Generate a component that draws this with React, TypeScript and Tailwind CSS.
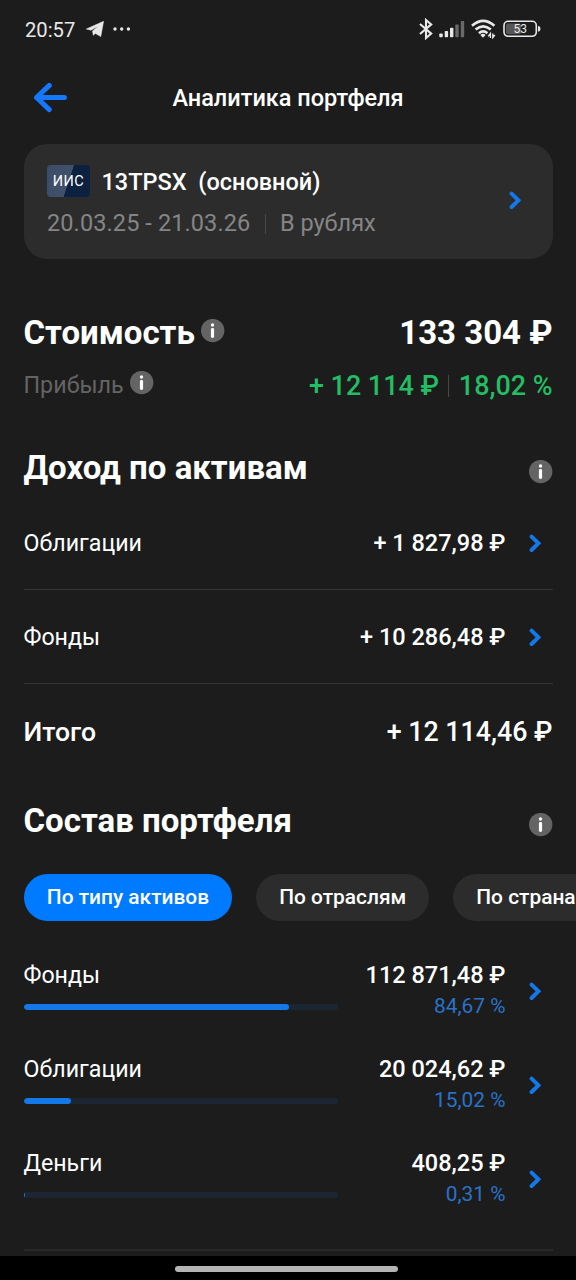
import React from "react";

function Chevron() {
  return (
    <svg width="14" height="20" viewBox="0 0 14 20" fill="none" className="shrink-0">
      <path d="M2.6 3.6L9.4 10.3L2.6 17" stroke="#1478e8" strokeWidth="4" strokeLinecap="round" strokeLinejoin="miter" />
    </svg>
  );
}

function Info() {
  return (
    <svg width="24" height="24" viewBox="0 0 24 24" className="shrink-0">
      <circle cx="11.7" cy="11.6" r="11.7" fill="#646464" />
      <circle cx="11.5" cy="6" r="1.7" fill="#fff" />
      <rect x="9.9" y="9" width="3.2" height="10" rx="1.4" fill="#fff" />
    </svg>
  );
}

function StatusBar() {
  return (
    <div className="flex h-[58px] items-center pl-[25px] pr-[35px] text-[#e8e8e8]">
      <span className="pt-px text-[20.2px] leading-6">20:57</span>
      <svg width="18" height="16" viewBox="0 0 18 16" className="ml-[10.5px]">
        <path d="M0.3 8L17.6 0.3L14.8 15.6L9.4 12.4L7.3 14.3L6.5 9.9L12.4 4.9L4.9 9.2Z" fill="currentColor" stroke="currentColor" strokeWidth="0.5" strokeLinejoin="round" />
      </svg>
      <svg width="18" height="4" viewBox="0 0 18 4" className="-mt-px ml-[9px]" fill="currentColor">
        <circle cx="2" cy="2" r="1.7" />
        <circle cx="8.7" cy="2" r="1.7" />
        <circle cx="15.4" cy="2" r="1.7" />
      </svg>
      <div className="ml-auto flex items-center">
        <svg width="16" height="22" viewBox="0 0 16 22" fill="none" stroke="currentColor" strokeWidth="2.1">
          <path d="M2 6L13.2 15.6L8 20V2L13.2 6.4L2 16" />
        </svg>
        <svg width="26" height="18" viewBox="0 0 26 18" className="ml-[5px]" fill="currentColor">
          <rect x="0.3" y="13.4" width="3.4" height="3.8" rx="0.8" />
          <rect x="5.7" y="11" width="3.4" height="6.2" rx="0.8" />
          <rect x="11" y="7.8" width="3.4" height="9.4" rx="0.8" />
          <rect x="16.3" y="4.4" width="3.4" height="12.8" rx="0.8" fill="#696969" />
          <rect x="21.8" y="1" width="3.4" height="16.2" rx="0.8" fill="#696969" />
        </svg>
        <svg width="25" height="20" viewBox="0 0 25 20" className="ml-[6px]" fill="none" stroke="currentColor" strokeWidth="2.7">
          <path d="M1 6.7Q12.2 -3.1 23.4 6.7" />
          <path d="M4.6 10.5Q12.2 4.1 19.8 10.5" />
          <path d="M8 14.2Q12.2 10.6 16.4 14.2" />
          <path d="M9.4 16Q12 13.6 14.6 16L12 18.8Z" fill="currentColor" stroke="none" />
          <path d="M19.4 19V14.6L17.2 17.4M21.8 14.4V18.6L23.8 16" strokeWidth="1.4" />
        </svg>
        <svg width="38" height="18" viewBox="0 0 38 18" className="ml-[7px]">
          <rect x="3" y="3.4" width="15" height="10.8" rx="2" fill="#565656" />
          <rect x="1" y="1.3" width="32.3" height="15" rx="4.2" fill="none" stroke="currentColor" strokeWidth="1.6" />
          <path d="M35 6Q37.4 6 37.4 8.8Q37.4 11.6 35 11.6Z" fill="currentColor" />
          <text x="17.2" y="13.2" textAnchor="middle" fontSize="12" fontWeight="400" fill="currentColor">53</text>
        </svg>
      </div>
    </div>
  );
}

function Header() {
  return (
    <header className="grid h-[86px] grid-cols-[80px_1fr_80px] items-start">
      <svg width="36" height="32" viewBox="0 0 36 32" fill="none" className="ml-[33px] mt-[23px]" stroke="#1478ff" strokeWidth="5" strokeLinecap="round" strokeLinejoin="round">
        <path d="M3.6 16.5H31.4M16.3 4.4L3.6 16.5L16.3 28.6" />
      </svg>
      <h1 className="mt-[24px] text-center text-[23.5px] font-medium leading-8">Аналитика портфеля</h1>
    </header>
  );
}

function AccountCard() {
  return (
    <section className="mx-[23.5px] flex h-[115px] items-center rounded-[23px] bg-[#2c2c2c] pl-[23.5px] pr-[29.5px]">
      <div className="flex-1">
        <div className="flex h-8 items-center">
          <span className="flex h-8 w-[43px] items-center justify-center rounded-[4px] bg-[linear-gradient(108deg,#3d4c66_0%,#42516b_50%,#0c2040_51%,#0c2040_100%)] pt-[2px] text-[14.5px] tracking-[0.5px]">ИИС</span>
          <span className="ml-[11.5px] whitespace-pre pt-px text-[23.5px] font-medium leading-8">13TPSX  (основной)</span>
        </div>
        <div className="mt-[11px] flex h-[30px] items-center pt-[2px] text-[23.5px] text-[#858585]">
          <span className="tracking-[0.1px]">20.03.25 - 21.03.26</span>
          <span className="mx-[14.3px] h-5 w-px bg-[#484848]" />
          <span>В рублях</span>
        </div>
      </div>
      <span className="-mt-[3px] flex"><Chevron /></span>
    </section>
  );
}

function Summary() {
  return (
    <section className="px-[23.5px] pt-[50px]">
      <div className="flex h-12 items-center justify-between">
        <div className="flex items-center gap-[6px]">
          <h2 className="text-[33px] font-bold">Стоимость</h2>
          <span className="-mt-[5px]"><Info /></span>
        </div>
        <span className="text-[33px] font-bold">133 304 ₽</span>
      </div>
      <div className="mt-[5px] flex h-12 items-center justify-between">
        <div className="flex items-center gap-[6px]">
          <span className="-mt-[2px] text-[23.3px] text-[#646464]">Прибыль</span>
          <span className="-mt-[7px]"><Info /></span>
        </div>
        <div className="flex items-center text-[26.9px] font-medium text-[#25bd63]">
          <span>+ 12 114 ₽</span>
          <span className="mx-[9.5px] h-[22px] w-px bg-[#484848]" />
          <span>18,02 %</span>
        </div>
      </div>
    </section>
  );
}

function SectionTitle({ title }: { title: string }) {
  return (
    <div className="flex h-12 items-center justify-between">
      <h2 className="text-[33px] font-bold">{title}</h2>
      <span className="mt-[7px]"><Info /></span>
    </div>
  );
}

function IncomeRow({ name, amount }: { name: string; amount: string }) {
  return (
    <div className="flex h-[94px] items-center border-b border-[#343434] pr-[10px]">
      <span className="flex-1 pt-[2px] text-[23.2px]">{name}</span>
      <span className="mr-[23px] pt-[2px] text-[23.5px] font-medium">{amount}</span>
      <Chevron />
    </div>
  );
}

function Income() {
  return (
    <section className="px-[23.5px] pt-[34px]">
      <SectionTitle title="Доход по активам" />
      <div className="mt-[4px]">
        <IncomeRow name="Облигации" amount="+ 1 827,98 ₽" />
        <IncomeRow name="Фонды" amount="+ 10 286,48 ₽" />
      </div>
      <div className="flex h-[94px] items-center justify-between pt-[2px] text-[26.8px] font-medium">
        <span className="text-[26.6px]">Итого</span>
        <span>+ 12 114,46 ₽</span>
      </div>
    </section>
  );
}

function AllocationRow({ name, amount, percent }: { name: string; amount: string; percent: number }) {
  return (
    <div className="flex h-[94px] items-start pr-[10px]">
      <div className="w-[314px]">
        <div className="text-[23.2px] leading-[31px]">{name}</div>
        <div className="mt-[13px] h-[6px] overflow-hidden rounded-full bg-[#1c2633]">
          <div className="h-full rounded-full bg-[#1478e8]" style={{ width: `${percent}%` }} />
        </div>
      </div>
      <div className="mr-[23px] flex-1 whitespace-nowrap text-right">
        <div className="text-[23.5px] font-medium leading-[31px]">{amount}</div>
        <div className="mt-px text-[20.9px] leading-[28px] text-[#2a72c8]">{percent.toFixed(2).replace(".", ",")} %</div>
      </div>
      <span className="mt-[21px]"><Chevron /></span>
    </div>
  );
}

function Composition() {
  const pill = "flex h-[47px] shrink-0 items-center rounded-full px-[23.3px] pt-px text-[20.9px] font-medium";
  return (
    <section className="pt-[19px]">
      <div className="px-[23.5px]"><SectionTitle title="Состав портфеля" /></div>
      <div className="mt-[29px] flex gap-[23.5px] overflow-hidden whitespace-nowrap pl-[23.5px]">
        <button className={`${pill} bg-[#007aff]`}>По типу активов</button>
        <button className={`${pill} bg-[#2c2c2c]`}>По отраслям</button>
        <button className={`${pill} bg-[#2c2c2c]`}>По странам</button>
      </div>
      <div className="mt-[39px] px-[23.5px]">
        <AllocationRow name="Фонды" amount="112 871,48 ₽" percent={84.67} />
        <AllocationRow name="Облигации" amount="20 024,62 ₽" percent={15.02} />
        <AllocationRow name="Деньги" amount="408,25 ₽" percent={0.31} />
        <div className="mt-[7px] h-[2px] bg-[#292929]" />
      </div>
    </section>
  );
}

export default function App() {
  return (
    <div className="flex h-[1280px] w-[576px] flex-col overflow-hidden bg-[#1c1c1c] font-['Roboto',sans-serif] text-white">
      <main className="h-[1256px] overflow-hidden">
        <StatusBar />
        <Header />
        <AccountCard />
        <Summary />
        <Income />
        <Composition />
      </main>
      <footer className="flex h-6 shrink-0 items-center justify-center bg-black">
        <div className="mr-[3px] mt-[2px] h-[6px] w-[223px] rounded-full bg-[#b4b4b4]" />
      </footer>
    </div>
  );
}
